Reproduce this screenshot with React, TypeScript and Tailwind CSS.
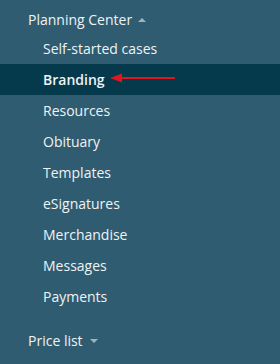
import React from "react";

const items = [
  "Self-started cases",
  "Branding",
  "Resources",
  "Obituary",
  "Templates",
  "eSignatures",
  "Merchandise",
  "Messages",
  "Payments",
];

export default function App() {
  return (
    <div
      className="w-[280px] h-[364px] bg-[#2f5c70] text-[#eef3f5] text-[14px] overflow-hidden"
      style={{ fontFamily: '"Open Sans", sans-serif' }}
    >
      <div className="h-[33px] pt-[4px] pl-[28px] flex items-start">
        <div className="h-[31px] leading-[31px] flex items-center">
          <span>Planning Center</span>
          <span className="ml-[6px] mt-[1px] w-0 h-0 border-l-[4.5px] border-r-[4.5px] border-b-[4px] border-l-transparent border-r-transparent border-b-[#9db3be]" />
        </div>
      </div>
      <div className="flex flex-col">
        {items.map((it) => (
          <div
            key={it}
            className={
              "relative h-[31px] leading-[31px] pl-[43px] " +
              (it === "Branding" ? "bg-[#053a4c] font-semibold" : "")
            }
          >
            {it}
            {it === "Branding" && (
              <svg
                className="absolute left-[108px] top-[9px]"
                width="70"
                height="12"
                viewBox="0 0 70 12"
              >
                <line x1="10" y1="5" x2="67" y2="5" stroke="#e0151d" strokeWidth="2" />
                <polygon points="2,5 14,0.5 14,9.5" fill="#e0151d" />
              </svg>
            )}
          </div>
        ))}
      </div>
      <div className="mt-[13px] pl-[28px] h-[31px] leading-[31px] flex items-center">
        <span>Price list</span>
        <span className="ml-[7px] mt-[1px] w-0 h-0 border-l-[4.5px] border-r-[4.5px] border-t-[4px] border-l-transparent border-r-transparent border-t-[#9db3be]" />
      </div>
    </div>
  );
}
